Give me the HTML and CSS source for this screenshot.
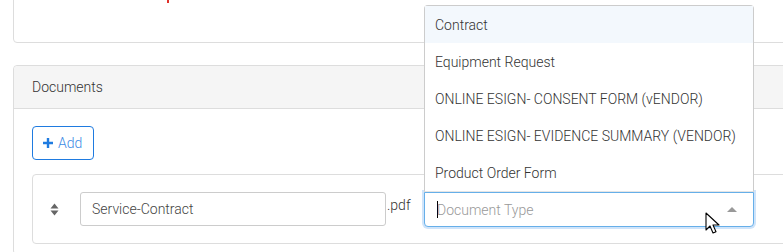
FILE: index.html
```html
<!DOCTYPE html>
<html lang="en">
<head>
  <meta charset="UTF-8" />
  <title>Documents</title>
  <link rel="stylesheet" href="styles.css">
</head>
<body>
  <div class="page">
    <section class="card card-top">
      <span class="error-mark"></span>
    </section>

    <section class="card">
      <div class="card-header">Documents</div>
      <div class="card-body">
        <button type="button" class="btn-add">
          <svg class="plus" width="12" height="12" viewBox="0 0 12 12"><path d="M6 1v10M1 6h10" stroke="#1f7be0" stroke-width="2.4"/></svg>
          Add
        </button>

        <div class="doc-row">
          <span class="sort-handle">
            <svg width="9" height="13" viewBox="0 0 9 13"><path d="M4.5 0.5L8.5 5.5H0.5Z M4.5 12.5L8.5 7.5H0.5Z" fill="#666"/></svg>
          </span>
          <input type="text" class="name-input" value="Service-Contract" />
          <span class="ext">.pdf</span>

          <div class="type-select">
            <ul class="type-menu">
              <li class="hover">Contract</li>
              <li>Equipment Request</li>
              <li>ONLINE ESIGN- CONSENT FORM (vENDOR)</li>
              <li>ONLINE ESIGN- EVIDENCE SUMMARY (VENDOR)</li>
              <li>Product Order Form</li>
            </ul>
            <div class="select-box">
              <span class="caret-line"></span>
              <span class="placeholder">Document Type</span>
              <span class="arrow"></span>
            </div>
            <svg class="mouse" width="16" height="23" viewBox="0 0 16 23"><path d="M1 1v17l4-4 3 7 3-1.3-3-6.7h6Z" fill="#fff" stroke="#000" stroke-width="1.1" stroke-linejoin="round"/></svg>
          </div>
        </div>
      </div>
    </section>
  </div>
</body>
</html>
```

FILE: styles.css
```css
* {
  box-sizing: border-box;
}

html, body {
  margin: 0;
  padding: 0;
  overflow: hidden;
}

body {
  background: #fff;
  font-family: Roboto, "Noto Sans", sans-serif;
  font-size: 14px;
  font-weight: 300;
  color: #333;
}

.page {
  width: 1000px;
  padding-left: 13px;
}

.card {
  border: 1px solid #ddd;
  border-radius: 4px;
  background: #fff;
}

.card-top {
  height: 60px;
  margin-top: -17px;
  margin-bottom: 22px;
  border-top-left-radius: 0;
}

/* bottom of a validation message that scrolled off the top */
.error-mark {
  display: block;
  width: 2px;
  height: 3px;
  margin: 16px 0 0 153px;
  background: #e0312a;
}

.card-header {
  height: 43px;
  padding: 0 18px;
  display: flex;
  align-items: center;
  background: #f5f5f5;
  border-bottom: 1px solid #ddd;
  border-radius: 4px 4px 0 0;
}

.card-body {
  padding: 17px 18px 10px;
}

.btn-add {
  height: 34px;
  width: 62px;
  padding: 0 0 0 9px;
  display: flex;
  align-items: center;
  gap: 4px;
  background: #fff;
  border: 1px solid #1f7be0;
  border-radius: 4px;
  font-family: Roboto, sans-serif;
  font-size: 14px;
  font-weight: 300;
  color: #3d8be5;
  cursor: pointer;
}

.doc-row {
  margin-top: 14px;
  height: 70px;
  border: 1px solid #ddd;
  border-radius: 4px;
  display: flex;
  align-items: flex-start;
  padding: 17px 0 0 17px;
}

.sort-handle {
  width: 30px;
  height: 34px;
  display: flex;
  align-items: center;
}

.name-input {
  width: 306px;
  height: 34px;
  border: 1px solid #ccc;
  border-radius: 3px;
  padding: 0 11px;
  font-family: Roboto, sans-serif;
  font-size: 14px;
  font-weight: 300;
  color: #444;
  outline: none;
}

.ext {
  width: 38px;
  padding: 5px 0 0 1px;
  font-size: 14px;
  color: #333;
}

.type-select {
  position: relative;
  width: 330px;
}

.select-box {
  height: 35px;
  border: 1px solid #66afe9;
  border-radius: 0 0 4px 4px;
  box-shadow: 0 0 0 2px #cfe4fa;
  display: flex;
  align-items: center;
  padding: 0 12px;
  background: #fff;
}

.caret-line {
  width: 1px;
  height: 17px;
  background: #000;
  margin-right: -1px;
}

.placeholder {
  flex: 1;
  font-size: 14px;
  color: #999;
}

.arrow {
  width: 0;
  height: 0;
  border-left: 5px solid transparent;
  border-right: 5px solid transparent;
  border-bottom: 5px solid #999;
  margin-right: 4px;
}

.type-menu {
  position: absolute;
  left: 0;
  right: 0;
  bottom: 35px;
  margin: 0;
  padding: 0;
  list-style: none;
  background: #fff;
  border: 1px solid #ccc;
  border-bottom-color: #e5e5e5;
  border-radius: 4px 4px 0 0;
  z-index: 2;
}

.type-menu li {
  height: 37px;
  padding: 10px 10px;
  line-height: 18px;
  color: #333;
}

.type-menu li.hover {
  background: #f3f8fd;
}

.mouse {
  position: absolute;
  left: 281px;
  top: 20px;
  z-index: 3;
}
```
